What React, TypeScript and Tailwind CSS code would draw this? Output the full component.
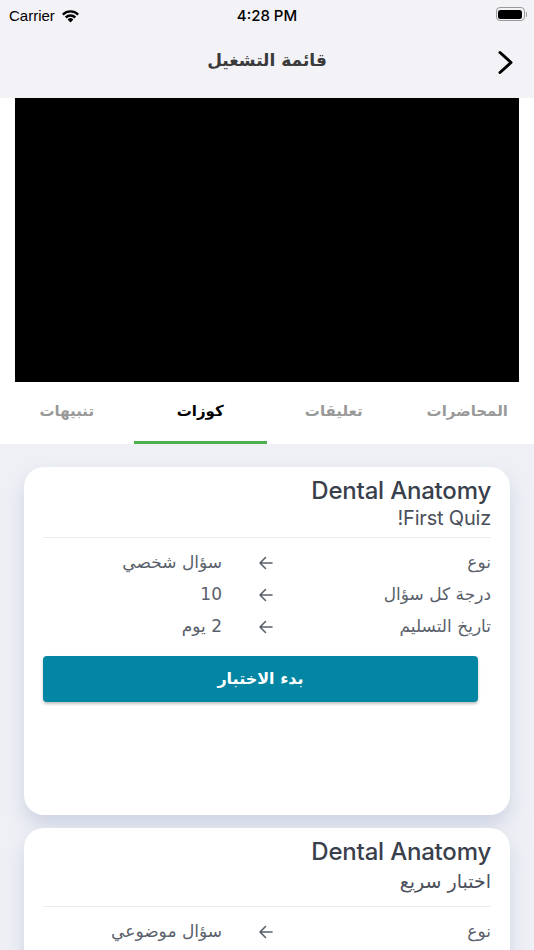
import React from "react";

const AR = { fontFamily: '"DejaVu Sans", "Noto Sans", sans-serif' };
const LAT = { fontFamily: '"Liberation Sans", Arial, sans-serif' };
const INTER = { fontFamily: 'Inter, "Liberation Sans", sans-serif' };

function Arrow() {
  return (
    <svg width="16" height="14" viewBox="0 0 16 14" fill="none" stroke="#5b606c" strokeWidth="1.6" strokeLinecap="round" strokeLinejoin="round">
      <path d="M14 7H2M7.5 1.5L2 7l5.5 5.5" />
    </svg>
  );
}

function Row({ label, value }: { label: string; value: string }) {
  return (
    <div className="grid grid-cols-[200px_50px_1fr] h-[32px] items-center text-[17px] text-[#5a5f6b]">
      <div style={AR}>{label}</div>
      <div className="flex justify-center"><Arrow /></div>
      <div className="pr-[19px]" style={AR}>{value}</div>
    </div>
  );
}

function Card({ sub, rows, button, latinSub }: { sub: string; rows: [string, string][]; button?: boolean; latinSub?: boolean }) {
  return (
    <div className="mx-[24px] bg-white rounded-[20px] shadow-[0_10px_18px_rgba(150,160,195,0.35)] px-[19px] pt-[9px] h-[348px] shrink-0">
      <div className="text-[24px] leading-[30px] font-medium text-[#3a3f4c] tracking-[-0.2px]" style={INTER} dir="ltr">
        <div className="text-right">Dental Anatomy</div>
      </div>
      {latinSub ? (
        <div className="text-[20px] leading-[24px] text-[#4a4f5b] tracking-[-0.2px]" style={INTER}>{sub}</div>
      ) : (
        <div className="text-[19px] leading-[28px] text-[#4a4f5b]" style={AR}>{sub}</div>
      )}
      <div className={`h-px bg-[#ececf0] ${latinSub ? "mt-[7px]" : "mt-[11px]"}`} />
      <div className="mt-[9px]">
        {rows.map(([l, v]) => (
          <Row key={l} label={l} value={v} />
        ))}
      </div>
      {button && (
        <div className="mr-[13px] mt-[13px] h-[46px] rounded-[4px] bg-[#0386a3] shadow-[0_2px_3px_rgba(0,0,0,0.25)] flex items-center justify-center text-white text-[16px] font-bold" style={AR}>
          بدء الاختبار
        </div>
      )}
    </div>
  );
}

export default function App() {
  return (
    <div className="w-[534px] h-[950px] overflow-hidden bg-[#eef0f5]" dir="rtl">
      {/* status bar */}
      <div className="h-[28px] bg-[#f2f2f7] relative flex items-center" dir="ltr" style={LAT}>
        <div className="absolute left-[9px] top-[5px] flex items-center gap-[6px] text-[15px] text-black">
          <span>Carrier</span>
          <svg width="19" height="14" viewBox="0 0 19 14">
            <path d="M9.5 13.5L6.6 10.4a4.2 4.2 0 0 1 5.8 0z" fill="#000" />
            <path d="M3.9 7.6a8 8 0 0 1 11.2 0l-1.7 1.8a5.6 5.6 0 0 0-7.8 0z" fill="#000" />
            <path d="M1 4.7a12.2 12.2 0 0 1 17 0l-1.6 1.7a9.8 9.8 0 0 0-13.8 0z" fill="#000" />
          </svg>
        </div>
        <div className="absolute left-0 right-0 top-[5px] text-center text-[15px] font-medium text-black" style={INTER}>4:28 PM</div>
        <div className="absolute right-[7px] top-[7px] flex items-center">
          <div className="w-[29px] h-[14px] rounded-[4px] border border-[#9a9a9a] p-[1.5px]">
            <div className="w-full h-full rounded-[2.5px] bg-black" />
          </div>
          <div className="w-[1.5px] h-[5px] bg-[#9a9a9a] ml-[1px] rounded-r" />
        </div>
      </div>
      {/* nav bar */}
      <div className="h-[70px] bg-[#f2f2f7] relative flex items-center justify-center">
        <div className="text-[17px] font-bold text-[#3a3a3a] -mt-[4px]" style={AR}>قائمة التشغيل</div>
        <svg className="absolute right-[20px] top-[22px]" width="17" height="25" viewBox="0 0 17 25" fill="none" stroke="#000" strokeWidth="3" strokeLinecap="round" strokeLinejoin="round">
          <path d="M3 2.5l11 10-11 10" />
        </svg>
      </div>
      {/* video */}
      <div className="bg-white px-[15px]">
        <div className="h-[284px] bg-black" />
      </div>
      {/* tabs */}
      <div className="bg-white grid grid-cols-4 h-[62px]">
        {[
          ["المحاضرات", false],
          ["تعليقات", false],
          ["كوزات", true],
          ["تنبيهات", false],
        ].map(([t, a]) => (
          <div key={t as string} className={`flex items-center justify-center relative text-[15px] font-bold ${a ? "text-black" : "text-[#999999]"}`} style={AR}>
            <span className="-mt-[4px]">{t as string}</span>
            {a && <div className="absolute bottom-0 left-0 right-0 h-[3px] bg-[#4caf50]" />}
          </div>
        ))}
      </div>
      {/* content */}
      <div className="pt-[23px] flex flex-col gap-[13px]">
        <Card
          sub="First Quiz!"
          latinSub
          button
          rows={[
            ["نوع", "سؤال شخصي"],
            ["درجة كل سؤال", "10"],
            ["تاريخ التسليم", "2 يوم"],
          ]}
        />
        <Card
          sub="اختبار سريع"
          rows={[["نوع", "سؤال موضوعي"]]}
        />
      </div>
    </div>
  );
}
